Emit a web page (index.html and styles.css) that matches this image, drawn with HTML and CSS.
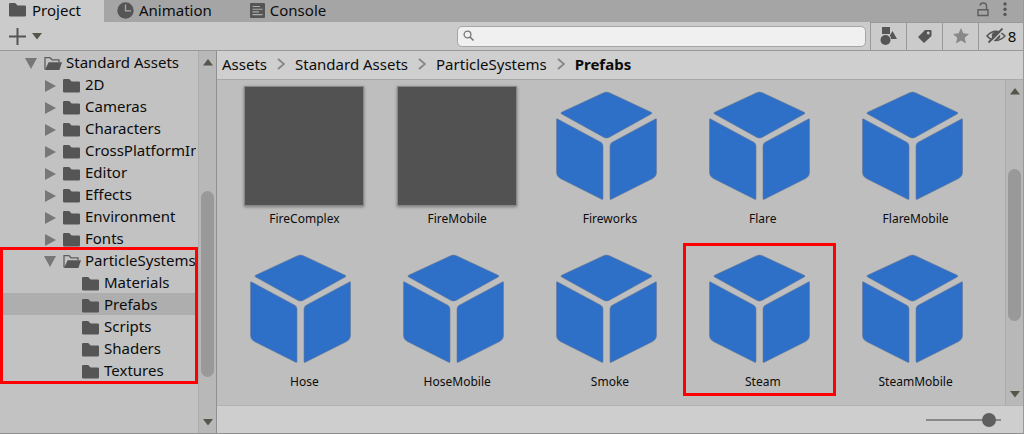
FILE: index.html
```
<!DOCTYPE html>
<html lang="en">
<head>
<meta charset="utf-8">
<title>Project</title>
<link rel="stylesheet" href="styles.css">
</head>
<body>
<svg class="defs" aria-hidden="true">
  <symbol id="folder" viewBox="0 0 18 16"><path d="M0 2.2Q0 1 1.2 1H6.2L8.6 3.4H15.8Q17 3.4 17 4.6V13.2Q17 14.4 15.8 14.4H1.2Q0 14.4 0 13.2Z" fill="#555"/></symbol>
  <symbol id="folder-open" viewBox="0 0 18 16"><path d="M1 13.4V1.6H6L8 3.8H15V6" fill="none" stroke="#5e5e5e" stroke-width="1.3"/><path d="M4.6 6.2H18L15.4 14H1Z" fill="#555"/></symbol>
  <symbol id="open" viewBox="0 0 12 12"><path d="M0 0H12L6 11Z" fill="#777"/></symbol>
  <symbol id="closed" viewBox="0 0 12 12"><path d="M1 0L12 6L1 12Z" fill="#777"/></symbol>
  <symbol id="up" viewBox="0 0 10 7"><path d="M0 6.5L5 0L10 6.5Z" fill="#555549"/></symbol>
  <symbol id="down" viewBox="0 0 10 7"><path d="M0 0H10L5 6.5Z" fill="#555549"/></symbol>
  <symbol id="chevron" viewBox="0 0 8 12"><path d="M1 1L7 6L1 11" fill="none" stroke="#858585" stroke-width="1.8"/></symbol>
  <symbol id="cube" viewBox="0 0 120 120"><g fill="#2e6fc7" stroke="#6a7a93" stroke-width=".6"><path d="M53.5 6.8Q56.5 5.4 59.5 6.8L101.2 26.2Q102.8 27 101.2 28L59 51.4Q56.5 52.8 54 51.4L11.6 28Q10 27 11.6 26.2Z"/><path d="M6.5 33.4Q6.5 32.4 7.6 33L50.8 56.2Q53 57.4 53 60V112.4Q53 114 51.6 113.2L10.4 92.6Q6.5 90.4 6.5 86.6Z"/><path d="M106.5 33.4Q106.5 32.4 105.4 33L62.2 56.2Q60 57.4 60 60V112.4Q60 114 61.4 113.2L102.6 92.6Q106.5 90.4 106.5 86.6Z"/></g></symbol>
</svg>

<header class="tabs">
  <div class="tab-list" role="tablist">
    <button class="tab active" role="tab" aria-selected="true"><svg width="18" height="16"><use href="#folder"/></svg>Project</button>
    <button class="tab" role="tab"><svg width="17" height="17" viewBox="0 0 17 17"><circle cx="8.5" cy="8.5" r="8.2" fill="#555"/><path d="M8.5 2.5V8.8H14" fill="none" stroke="#aaa" stroke-width="1.3"/></svg>Animation</button>
    <button class="tab" role="tab"><svg width="15" height="15" viewBox="0 0 15 15"><rect width="15" height="15" rx="1" fill="#555"/><path d="M2.500 3.500H10M2.500 6.200H12.500M2.500 8.900H9M2.500 11.600H12.500" stroke="#aaa" stroke-width="1.1"/></svg>Console</button>
  </div>
  <button class="icon-button" aria-label="Lock"><svg width="12" height="15" viewBox="0 0 12 15"><path d="M1 7.700H11V13.500H1ZM9.500 7.500V4Q9.500 1 6.200 1Q3.500 1 3 3.500" fill="none" stroke="#5d5d5d" stroke-width="1.400"/></svg></button>
  <button class="icon-button" aria-label="Menu"><svg width="4" height="15" viewBox="0 0 4 15"><g fill="#555"><circle cx="2" cy="2" r="1.700"/><circle cx="2" cy="7.200" r="1.700"/><circle cx="2" cy="12.400" r="1.700"/></g></svg></button>
</header>

<div class="toolbar">
  <button class="create" aria-label="Create"><svg width="17" height="17" viewBox="0 0 17 17"><path d="M8.500 0V17M0 8.500H17" stroke="#555" stroke-width="2"/></svg><svg width="10" height="7"><use href="#down"/></svg></button>
  <label class="search"><svg width="12" height="12" viewBox="0 0 12 12"><circle cx="4.500" cy="4.500" r="3.400" fill="none" stroke="#777" stroke-width="1.300"/><path d="M7 7L10.500 10.500" stroke="#777" stroke-width="1.600"/></svg><input type="text" aria-label="Search"></label>
  <div class="filters">
    <button aria-label="Search by type"><svg width="18" height="18" viewBox="0 0 18 18"><g fill="#555"><rect x="2" width="8" height="7"/><path d="M12.500 4L17 12H11Q11 9.500 9.800 8.500Z"/><circle cx="5.500" cy="13" r="5"/></g></svg></button>
    <button aria-label="Search by label"><svg width="16" height="16" viewBox="0 0 16 16"><path d="M8 2H13.500Q14.500 2 14.500 3V8L7 15L1 9ZM11.200 3.600A1.400 1.400 0 1 0 11.300 3.600Z" fill="#555" fill-rule="evenodd"/></svg></button>
    <button aria-label="Save search"><svg width="16" height="16" viewBox="0 0 16 16"><path d="M8 0L10.300 5.300L16 5.900L11.700 9.700L13 15.500L8 12.500L3 15.500L4.300 9.700L0 5.900L5.700 5.300Z" fill="#888"/></svg></button>
    <button class="hidden-count" aria-label="Hidden packages"><svg width="20" height="16" viewBox="0 0 20 16"><path d="M1 8Q9.500-1.500 19 8Q9.500 17 1 8Z" fill="none" stroke="#555" stroke-width="1.500"/><circle cx="10" cy="7.800" r="4.300" fill="#555"/><path d="M4 15.500L18 1.500" stroke="#cbcbcb" stroke-width="1.500"/><path d="M2.500 14.500L16.500 .5" stroke="#555" stroke-width="1.800"/></svg>8</button>
  </div>
</div>

<main class="workspace">
  <nav class="sidebar" aria-label="Folders">
    <ul class="tree">
      <li class="row level-1"><svg class="fold"><use href="#open"/></svg><svg class="folder"><use href="#folder-open"/></svg>Standard Assets</li>
      <li class="row level-2"><svg class="fold"><use href="#closed"/></svg><svg class="folder"><use href="#folder"/></svg>2D</li>
      <li class="row level-2"><svg class="fold"><use href="#closed"/></svg><svg class="folder"><use href="#folder"/></svg>Cameras</li>
      <li class="row level-2"><svg class="fold"><use href="#closed"/></svg><svg class="folder"><use href="#folder"/></svg>Characters</li>
      <li class="row level-2"><svg class="fold"><use href="#closed"/></svg><svg class="folder"><use href="#folder"/></svg>CrossPlatformInput</li>
      <li class="row level-2"><svg class="fold"><use href="#closed"/></svg><svg class="folder"><use href="#folder"/></svg>Editor</li>
      <li class="row level-2"><svg class="fold"><use href="#closed"/></svg><svg class="folder"><use href="#folder"/></svg>Effects</li>
      <li class="row level-2"><svg class="fold"><use href="#closed"/></svg><svg class="folder"><use href="#folder"/></svg>Environment</li>
      <li class="row level-2"><svg class="fold"><use href="#closed"/></svg><svg class="folder"><use href="#folder"/></svg>Fonts</li>
      <li class="marked-group">
        <div class="row level-2"><svg class="fold"><use href="#open"/></svg><svg class="folder"><use href="#folder-open"/></svg>ParticleSystems</div>
        <ul>
          <li class="row level-3"><svg class="folder"><use href="#folder"/></svg>Materials</li>
          <li class="row level-3 selected"><svg class="folder"><use href="#folder"/></svg>Prefabs</li>
          <li class="row level-3"><svg class="folder"><use href="#folder"/></svg>Scripts</li>
          <li class="row level-3"><svg class="folder"><use href="#folder"/></svg>Shaders</li>
          <li class="row level-3"><svg class="folder"><use href="#folder"/></svg>Textures</li>
        </ul>
      </li>
    </ul>
    <div class="scrollbar">
      <button aria-label="Scroll up"><svg width="10" height="7"><use href="#up"/></svg></button>
      <div class="track"><div class="thumb" style="top:35%;height:55%"></div></div>
      <button aria-label="Scroll down"><svg width="10" height="7"><use href="#down"/></svg></button>
    </div>
  </nav>

  <section class="browser">
    <nav class="breadcrumb" aria-label="Path">
      <a href="#">Assets</a><svg width="8" height="12"><use href="#chevron"/></svg>
      <a href="#">Standard Assets</a><svg width="8" height="12"><use href="#chevron"/></svg>
      <a href="#">ParticleSystems</a><svg width="8" height="12"><use href="#chevron"/></svg>
      <a href="#" class="current">Prefabs</a>
    </nav>
    <div class="content">
      <div class="assets">
        <figure><div class="preview"></div><figcaption>FireComplex</figcaption></figure>
        <figure><div class="preview"></div><figcaption>FireMobile</figcaption></figure>
        <figure><svg class="cube"><use href="#cube"/></svg><figcaption>Fireworks</figcaption></figure>
        <figure><svg class="cube"><use href="#cube"/></svg><figcaption>Flare</figcaption></figure>
        <figure><svg class="cube"><use href="#cube"/></svg><figcaption>FlareMobile</figcaption></figure>
        <figure><svg class="cube"><use href="#cube"/></svg><figcaption>Hose</figcaption></figure>
        <figure><svg class="cube"><use href="#cube"/></svg><figcaption>HoseMobile</figcaption></figure>
        <figure><svg class="cube"><use href="#cube"/></svg><figcaption>Smoke</figcaption></figure>
        <figure class="marked"><svg class="cube"><use href="#cube"/></svg><figcaption>Steam</figcaption></figure>
        <figure><svg class="cube"><use href="#cube"/></svg><figcaption>SteamMobile</figcaption></figure>
      </div>
      <div class="scrollbar">
        <button aria-label="Scroll up"><svg width="10" height="7"><use href="#up"/></svg></button>
        <div class="track"><div class="thumb" style="top:24%;height:54%"></div></div>
        <button aria-label="Scroll down"><svg width="10" height="7"><use href="#down"/></svg></button>
      </div>
    </div>
    <footer class="footer"><input type="range" min="0" max="100" value="92" aria-label="Icon size"></footer>
  </section>
</main>
</body>
</html>
```
FILE: styles.css
```
* { box-sizing: border-box; }
body {
  margin: 0;
  height: 100vh;
  display: flex;
  flex-direction: column;
  overflow: hidden;
  background: #c2c2c2;
  border-right: 1px solid #999;
  border-bottom: 1px solid #8f8f8f;
  color: #0c0c0c;
  font: 15px/22px "Noto Sans", "Open Sans", sans-serif;
}
.defs { position: absolute; width: 0; height: 0; }
svg { display: block; flex: none; }
button { font: inherit; color: inherit; border: 0; padding: 0; background: none; }
ul { list-style: none; margin: 0; padding: 0; }

.tabs { display: flex; align-items: center; gap: 14px; height: 22px; padding-right: 16px; background: #a5a5a5; }
.tab-list { display: flex; flex: 1; height: 100%; }
.tab { display: flex; align-items: center; gap: 5px; height: 22px; padding: 0 25px 2px 13px; }
.tab.active { width: 104px; padding: 0 0 2px 9px; background: #cbcbcb; }
.icon-button { display: flex; padding-bottom: 4px; }

.toolbar { display: flex; align-items: center; height: 29px; background: #cbcbcb; border-bottom: 1px solid #999; }
.create { display: flex; align-items: center; gap: 6px; padding-left: 9px; margin-right: auto; }
.search { display: flex; align-items: center; gap: 4px; width: 40%; height: 21px; padding: 0 5px; border: 1px solid #a6a6a6; border-radius: 5px; background: #f0f0f0; }
.search input { flex: 1; min-width: 0; border: 0; padding: 0; background: none; outline: 0; font: inherit; }
.filters { display: flex; align-self: stretch; margin-left: 4px; border-top: 1px solid #999; }
.filters button { display: flex; align-items: center; justify-content: center; width: 36px; padding-bottom: 2px; border-left: 1px solid #999; }
.filters .hidden-count { width: 45px; gap: 2px; }

.workspace { display: flex; flex: 1; min-height: 0; }
.sidebar { display: flex; width: 217px; border-right: 1px solid #909090; }
.tree { flex: 1; min-width: 0; }
.row { display: flex; align-items: center; height: 22px; margin-right: 2px; overflow: hidden; white-space: nowrap; }
.level-1 { padding-left: 25px; }
.level-2 { padding-left: 44px; }
.level-3 { padding-left: 82px; }
.fold { width: 12px; height: 12px; margin: 3px 7px 0 0; }
.folder { width: 18px; height: 16px; margin: 3px 4px 0 0; }
.selected { background: #aeaeae; }
.marked-group { position: relative; }
.marked-group::after { content: ""; position: absolute; inset: -2px 0 -3px; border: 3px solid #f00; }

.scrollbar { display: flex; flex-direction: column; width: 18px; background: #b8b8b8; border-left: 1px solid #acacac; }
.scrollbar button { display: flex; align-items: center; justify-content: center; height: 22px; }
.track { position: relative; flex: 1; }
.thumb { position: absolute; left: 2px; right: 2px; border-radius: 7px; background: #999; }

.browser { display: flex; flex: 1; min-width: 0; flex-direction: column; }
.breadcrumb { display: flex; align-items: center; gap: 10px; height: 29px; padding: 0 5px 2px; background: #cfcfcf; border-bottom: 1px solid #a8a8a8; }
.breadcrumb a { color: inherit; text-decoration: none; }
.breadcrumb .current { font-weight: bold; }
.content { display: flex; flex: 1; min-height: 0; background: #bebebe; }
.assets { display: grid; flex: 1; grid-template-columns: repeat(5, 1fr); align-content: start; padding: 1px 13px 0 11px; }
figure { position: relative; margin: 0; padding: 5px 0; height: 163px; display: flex; flex-direction: column; align-items: center; gap: 3px; }
.preview, .cube { width: 120px; height: 120px; }
.preview { background: #525252; border: 1px solid #888; box-shadow: 0 1px 3px #777; }
figcaption { font-size: 12px; line-height: 20px; }
.marked::after { content: ""; position: absolute; inset: -1px 3px 11px -3px; border: 3px solid #f00; }

.footer { display: flex; align-items: center; justify-content: flex-end; height: 28px; padding-right: 22px; background: #cecece; border-top: 1px solid #b2b2b2; }
.footer input { appearance: none; width: 75px; height: 14px; margin: 0; background: linear-gradient(#888, #888) center / 100% 2px no-repeat; }
.footer input::-webkit-slider-thumb { appearance: none; width: 14px; height: 14px; border-radius: 50%; background: #5f5f5f; }
```
